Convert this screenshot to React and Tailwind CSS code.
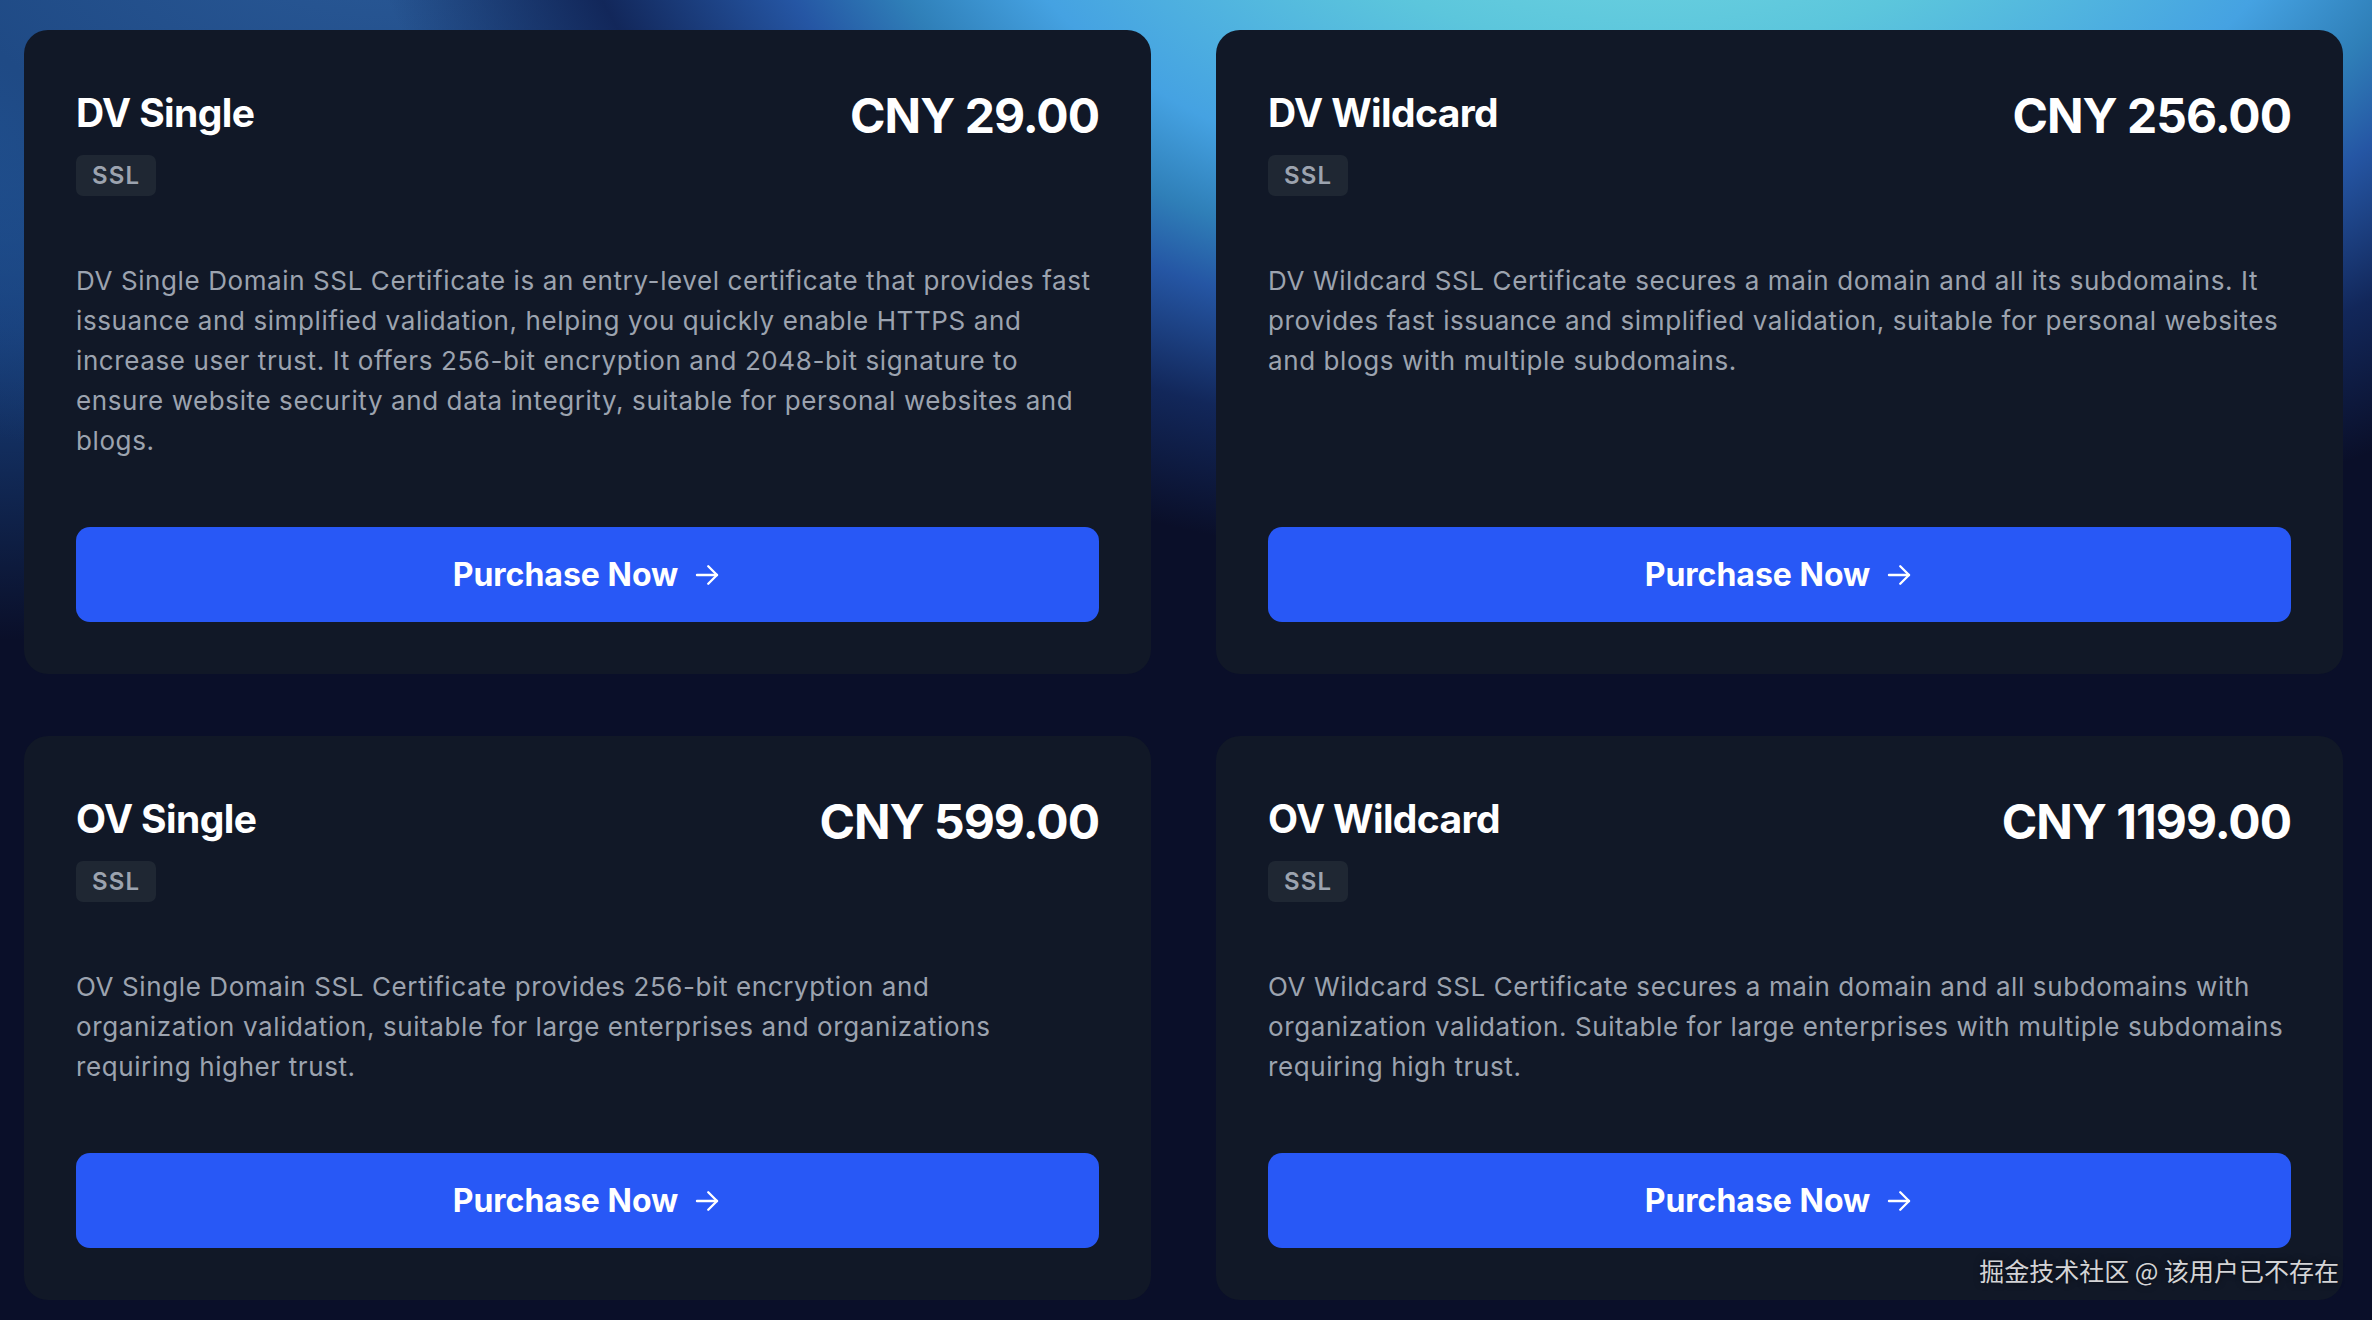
import React from "react";

const plans = [
  {
    name: "DV Single",
    price: "CNY 29.00",
    desc: "DV Single Domain SSL Certificate is an entry-level certificate that provides fast issuance and simplified validation, helping you quickly enable HTTPS and increase user trust. It offers 256-bit encryption and 2048-bit signature to ensure website security and data integrity, suitable for personal websites and blogs.",
  },
  {
    name: "DV Wildcard",
    price: "CNY 256.00",
    desc: "DV Wildcard SSL Certificate secures a main domain and all its subdomains. It provides fast issuance and simplified validation, suitable for personal websites and blogs with multiple subdomains.",
  },
  {
    name: "OV Single",
    price: "CNY 599.00",
    desc: "OV Single Domain SSL Certificate provides 256-bit encryption and organization validation, suitable for large enterprises and organizations requiring higher trust.",
  },
  {
    name: "OV Wildcard",
    price: "CNY 1199.00",
    desc: "OV Wildcard SSL Certificate secures a main domain and all subdomains with organization validation. Suitable for large enterprises with multiple subdomains requiring high trust.",
  },
];

function Arrow() {
  return (
    <svg width="30" height="30" viewBox="0 0 24 24" fill="none" stroke="currentColor" strokeWidth="1.9" strokeLinecap="round" strokeLinejoin="round">
      <path d="M4 12h16" />
      <path d="M13 5l7 7-7 7" />
    </svg>
  );
}

function Card({ plan }) {
  return (
    <div className="flex flex-col rounded-[24px] bg-[#111827] p-[52px]">
      <div className="flex items-start justify-between">
        <div className="flex flex-col items-start">
          <h3 className="pt-[3px] text-[39px] font-bold leading-[56px] tracking-[-0.6px] text-white">{plan.name}</h3>
          <span className="mt-[14px] inline-flex h-[41px] items-center rounded-[7px] bg-[#1f2733] px-[16px] text-[24px] font-semibold tracking-wider text-[#9ca3af]">
            SSL
          </span>
        </div>
        <div className="text-[48px] font-bold leading-[67px] tracking-[-1px] text-white">{plan.price}</div>
      </div>
      <p className="mb-[66px] mr-[5px] mt-[65px] text-[26px] leading-[40px] tracking-[0.6px] text-[#9ca3af]">{plan.desc}</p>
      <button className="mt-auto flex h-[95px] w-full items-center justify-center gap-[14px] rounded-[14px] bg-[#2858f6] text-[32px] font-bold text-white">
        <span>Purchase Now</span>
        <Arrow />
      </button>
    </div>
  );
}

export default function App() {
  return (
    <div
      className="relative min-h-[1320px] w-full overflow-hidden bg-[#0a0f29] bg-[radial-gradient(ellipse_1300px_760px_at_1650px_-180px,#7fe0e4_0%,#5cc6dc_30%,#45a2e2_52%,#2f7fb8_62%,#2556a4_70%,#12275a_84%,transparent_100%),radial-gradient(ellipse_1000px_560px_at_380px_-80px,#2a5a98_0%,#1f4a85_45%,transparent_100%),radial-gradient(ellipse_600px_520px_at_0px_120px,#1f5aa2_0%,#173f7c_40%,transparent_100%)] pb-[23px] pl-[24px] pr-[29px] pt-[30px]"
      style={{ fontFamily: "Inter, 'Noto Sans', sans-serif" }}
    >
      <div className="grid grid-cols-2 gap-x-[65px] gap-y-[62px]">
        {plans.map((p) => (
          <Card key={p.name} plan={p} />
        ))}
      </div>
      <div
        className="absolute bottom-[37px] right-[33px] text-[25px] leading-[32px] text-[#d4d4d6] [text-shadow:0_0_6px_rgba(0,0,0,0.6)]"
        style={{ fontFamily: "'Noto Sans CJK SC', 'Noto Sans', sans-serif" }}
      >
        掘金技术社区 @ 该用户已不存在
      </div>
    </div>
  );
}
